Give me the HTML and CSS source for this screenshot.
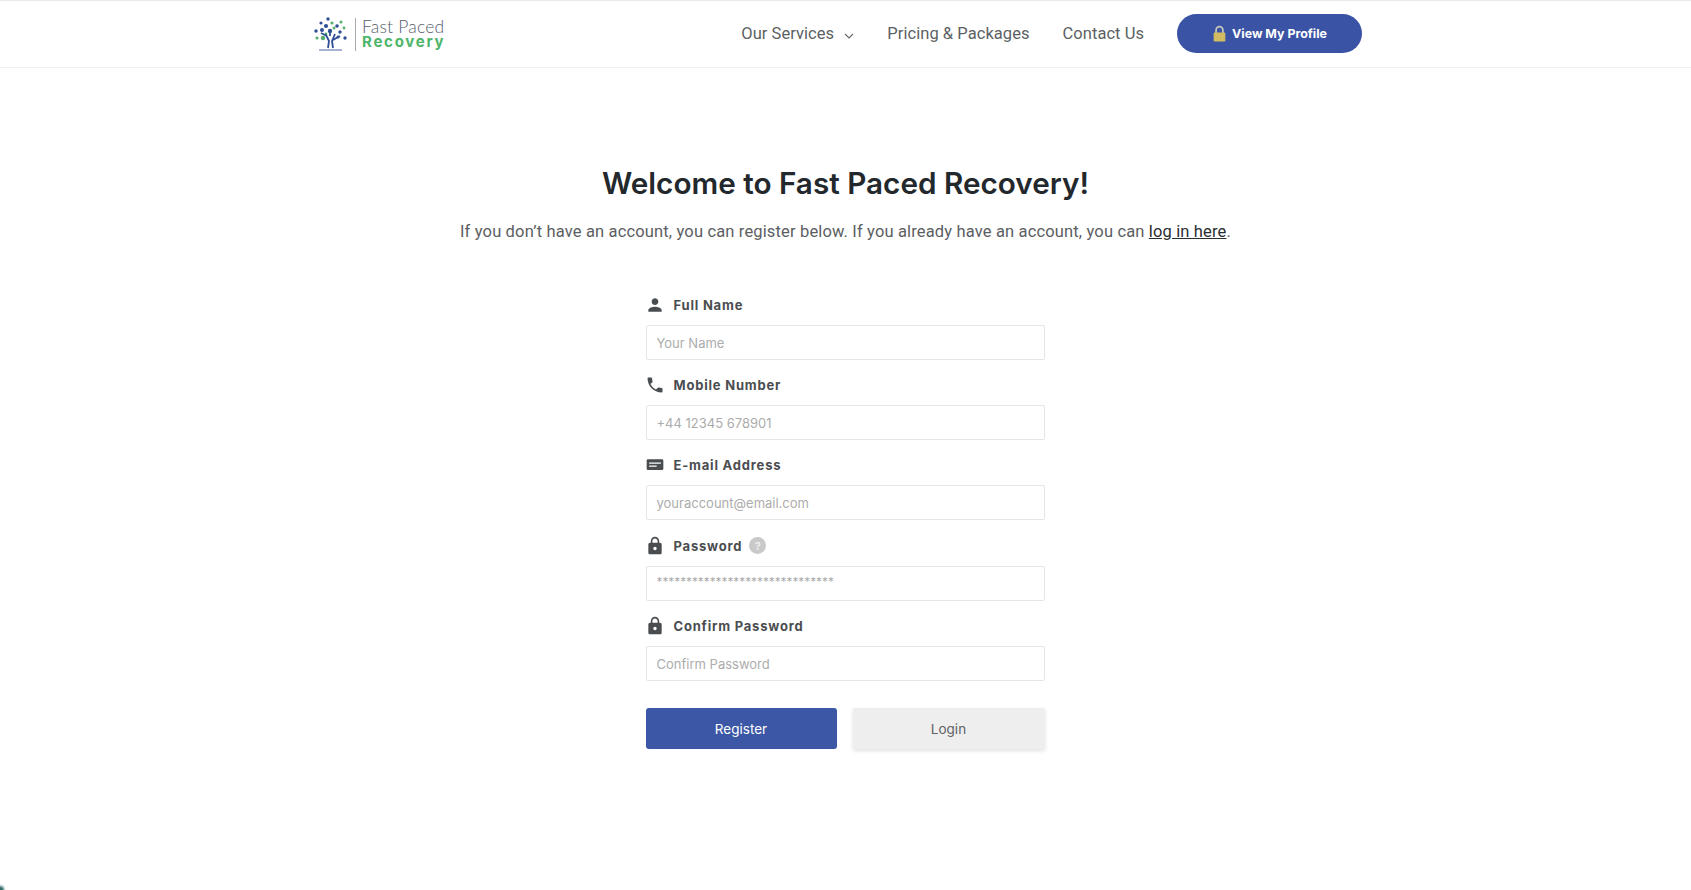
FILE: index.html
```html
<!DOCTYPE html>
<html lang="en">
<head>
<meta charset="utf-8">
<title>Fast Paced Recovery</title>
<link rel="stylesheet" href="styles.css">
</head>
<body>
<header class="site-header">
  <div class="header-inner">
    <a class="logo" href="#">
      <svg class="logo-tree" viewBox="0 0 34 34" aria-hidden="true">
        <g fill="#2f4f96">
          <circle cx="15" cy="2" r="1.7"/><circle cx="8" cy="6" r="1.6"/><circle cx="13" cy="9" r="2.1"/><circle cx="24" cy="9" r="1.8"/><circle cx="3" cy="14" r="1.7"/><circle cx="9" cy="13" r="2"/><circle cx="17" cy="14" r="2.200"/><circle cx="27" cy="15" r="1.700"/><circle cx="32" cy="21" r="1.700"/><circle cx="25" cy="20" r="1.500"/>
        </g>
        <g fill="#55b06e">
          <circle cx="19" cy="6" r="1.600"/><circle cx="28" cy="5" r="1.500"/><circle cx="4" cy="21" r="1.600"/><circle cx="10" cy="21" r="2.200"/><circle cx="21" cy="11" r="1.500"/><circle cx="31" cy="11" r="1.400"/><circle cx="13" cy="17" r="1.400"/>
        </g>
        <path class="logo-trunk" d="M17 14v5M13 18l3 6-1 7M22 17l-3 7 1 7M8 16l6 3M27 19l-7 4"/>
        <path class="logo-ground" d="M6 33h23"/>
      </svg>
      <span class="logo-rule"></span>
      <span class="logo-text">
        <span class="logo-top">Fast Paced</span>
        <span class="logo-bottom">Recovery</span>
      </span>
    </a>
    <nav class="main-nav">
      <a class="nav-link" href="#">Our Services
        <svg class="chevron" viewBox="0 0 10 6" aria-hidden="true"><path d="M1 1l4 4 4-4"/></svg>
      </a>
      <a class="nav-link" href="#">Pricing &amp; Packages</a>
      <a class="nav-link" href="#">Contact Us</a>
      <a class="profile-btn" href="#">
        <svg class="padlock" viewBox="0 0 14 16" aria-hidden="true">
          <path class="padlock-shackle" d="M3.800 8V4.800a3.200 3.200 0 0 1 6.400 0V8"/>
          <rect class="padlock-body" x="1.500" y="7" width="11" height="8.500" rx="1"/>
        </svg>
        View My Profile
      </a>
    </nav>
  </div>
</header>

<main class="page">
  <h1 class="title">Welcome to Fast Paced Recovery!</h1>
  <p class="intro">If you don’t have an account, you can register below. If you already have an account, you can <a href="#">log in here</a>.</p>

  <form class="register-form">
    <div class="field">
      <label class="field-label" for="name">
        <svg class="field-icon" viewBox="0 0 24 24" aria-hidden="true"><path d="M12 12c2.210 0 4-1.790 4-4s-1.790-4-4-4-4 1.790-4 4 1.790 4 4 4zm0 2c-2.670 0-8 1.340-8 4v2h16v-2c0-2.660-5.330-4-8-4z"/></svg>
        Full Name
      </label>
      <input class="text-input" id="name" type="text" placeholder="Your Name">
    </div>
    <div class="field">
      <label class="field-label" for="mobile">
        <svg class="field-icon" viewBox="0 0 24 24" aria-hidden="true"><path d="M6.620 10.790c1.440 2.830 3.760 5.140 6.590 6.590l2.200-2.200c.27-.27.67-.36 1.020-.24 1.120.37 2.330.57 3.570.57.55 0 1 .45 1 1V20c0 .55-.45 1-1 1-9.390 0-17-7.610-17-17 0-.55.45-1 1-1h3.500c.55 0 1 .45 1 1 0 1.250.2 2.450.57 3.570.11.35.03.74-.25 1.020l-2.200 2.200z"/></svg>
        Mobile Number
      </label>
      <input class="text-input" id="mobile" type="text" placeholder="+44 12345 678901">
    </div>
    <div class="field">
      <label class="field-label" for="email">
        <svg class="field-icon" viewBox="0 0 24 24" aria-hidden="true"><path fill-rule="evenodd" d="M2 6.500C2 5.700 2.700 5 3.500 5h17c.8 0 1.500.7 1.500 1.500v10c0 .8-.7 1.500-1.500 1.500h-17C2.700 18 2 17.300 2 16.500zM5 9v1.500h14V9zm0 3.500V14h9v-1.500z"/></svg>
        E-mail Address
      </label>
      <input class="text-input" id="email" type="text" placeholder="youraccount@email.com">
    </div>
    <div class="field field-password">
      <label class="field-label" for="password">
        <svg class="field-icon" viewBox="0 0 24 24" aria-hidden="true"><path d="M18 8h-1V6c0-2.760-2.240-5-5-5S7 3.240 7 6v2H6c-1.100 0-2 .9-2 2v10c0 1.100.9 2 2 2h12c1.100 0 2-.9 2-2V10c0-1.100-.9-2-2-2zm-6 9c-1.100 0-2-.9-2-2s.9-2 2-2 2 .9 2 2-.9 2-2 2zm3.100-9H8.900V6c0-1.710 1.390-3.100 3.100-3.100 1.710 0 3.100 1.390 3.100 3.100v2z"/></svg>
        Password
        <span class="help-badge">?</span>
      </label>
      <input class="text-input input-stars" id="password" type="text" placeholder="******************************">
    </div>
    <div class="field">
      <label class="field-label" for="confirm">
        <svg class="field-icon" viewBox="0 0 24 24" aria-hidden="true"><path d="M18 8h-1V6c0-2.760-2.240-5-5-5S7 3.240 7 6v2H6c-1.100 0-2 .9-2 2v10c0 1.100.9 2 2 2h12c1.100 0 2-.9 2-2V10c0-1.100-.9-2-2-2zm-6 9c-1.100 0-2-.9-2-2s.9-2 2-2 2 .9 2 2-.9 2-2 2zm3.100-9H8.900V6c0-1.710 1.390-3.100 3.100-3.100 1.710 0 3.100 1.390 3.100 3.100v2z"/></svg>
        Confirm Password
      </label>
      <input class="text-input" id="confirm" type="text" placeholder="Confirm Password">
    </div>
    <div class="actions">
      <button class="btn btn-primary" type="button">Register</button>
      <button class="btn btn-secondary" type="button">Login</button>
    </div>
  </form>
</main>
<div class="corner-mark"></div>
</body>
</html>
```
FILE: styles.css
```css
* { box-sizing: border-box; }
html, body { margin: 0; height: 100%; }
body {
  background: #fff;
  font-family: Roboto, "Liberation Sans", sans-serif;
  color: #54595f;
  overflow: hidden;
}
a { color: inherit; text-decoration: none; }

.site-header {
  height: 68px;
  padding-bottom: 2px;
  border-top: 1px solid #e9e9e9;
  border-bottom: 1px solid #f0f0f0;
}
.header-inner {
  width: 1049px;
  margin-left: 313px;
  height: 100%;
  display: flex;
  align-items: center;
  justify-content: space-between;
}
.logo { display: flex; align-items: center; margin-top: 2px; }
.logo-tree { width: 34px; height: 34px; }
.logo-trunk { fill: none; stroke: #2f4f96; stroke-width: 1.800; }
.logo-ground { fill: none; stroke: #6d7fb5; stroke-width: 1.200; }
.logo-rule { width: 1px; height: 33px; background: #a6abb2; margin: 0 6px 0 8px; }
.logo-text { display: flex; flex-direction: column; line-height: 15px; }
.logo-top { font-family: Lato, sans-serif; font-size: 17.500px; font-weight: 300; color: #56606c; letter-spacing: .2px; }
.logo-bottom { font-family: Inter, sans-serif; font-size: 15px; font-weight: 700; color: #4fb56b; letter-spacing: 1.750px; }

.main-nav { display: flex; align-items: center; }
.nav-link { font-size: 16.500px; color: #5c5f63; margin-right: 33px; letter-spacing: .05px; white-space: nowrap; }
.chevron { width: 10px; height: 6px; margin-left: 6px; vertical-align: 0; fill: none; stroke: #666; stroke-width: 1.100; }
.profile-btn {
  width: 185px;
  height: 39px;
  border-radius: 20px;
  background: #3b53a4;
  color: #fff;
  font-family: Inter, sans-serif;
  font-size: 12.400px;
  font-weight: 700;
  display: flex;
  align-items: center;
  justify-content: center;
  gap: 5px;
  white-space: nowrap;
}
.padlock { width: 15px; height: 17px; }
.padlock-shackle { fill: none; stroke: #c6c8b8; stroke-width: 1.600; }
.padlock-body { fill: #d3bb62; }

.page { padding-top: 95px; }
.title {
  margin: 0;
  text-align: center;
  font-family: Inter, sans-serif;
  font-size: 29.700px;
  line-height: 40px;
  font-weight: 600;
  color: #23282d;
}
.intro {
  margin: 17px 0 0;
  text-align: center;
  font-size: 16.500px;
  line-height: 24px;
  letter-spacing: .15px;
  color: #5b5e62;
}
.intro a { color: #2a2d31; text-decoration: underline; }

.register-form { width: 400px; margin: 49px auto 0; }
.field { margin-bottom: 13px; }
.field-label {
  display: flex;
  align-items: center;
  height: 24px;
  margin-bottom: 8px;
  font-family: Inter, sans-serif;
  font-size: 13px;
  font-weight: 700;
  letter-spacing: .8px;
  color: #4a4d50;
}
.field-password .field-label { height: 25px; }
.field-icon { width: 20px; height: 20px; margin-right: 9px; margin-left: -1px; fill: #4a4d50; flex: none; }
.help-badge {
  width: 17px;
  height: 17px;
  margin-left: 7px;
  border-radius: 50%;
  background: #c9c9c9;
  color: #eee;
  font-size: 11px;
  letter-spacing: 0;
  display: flex;
  align-items: center;
  justify-content: center;
}
.text-input {
  display: block;
  width: 399px;
  height: 35px;
  padding: 0 10px;
  border: 1px solid #e5e5e5;
  border-radius: 2px;
  background: #fff;
  font-family: Inter, sans-serif;
  font-size: 13px;
  outline: none;
}
.text-input::placeholder { color: #acacac; opacity: 1; }
.input-stars { padding-bottom: 4px; font-size: 11.800px; }

.actions { display: flex; gap: 16px; margin-top: 27px; }
.btn {
  width: 192px;
  height: 41px;
  border: 0;
  border-radius: 2px;
  font-family: Inter, sans-serif;
  font-size: 13.500px;
}
.btn-primary { background: #3b57a6; color: #fff; width: 191px; border-radius: 3px; }
.btn-secondary { background: #eeeeee; color: #606367; box-shadow: 0 2px 4px rgba(0,0,0,.12); }

.corner-mark {
  position: fixed;
  left: -4px;
  bottom: -4px;
  width: 8px;
  height: 8px;
  border-radius: 50%;
  background: #2f6a66;
  filter: blur(1px);
}
```
